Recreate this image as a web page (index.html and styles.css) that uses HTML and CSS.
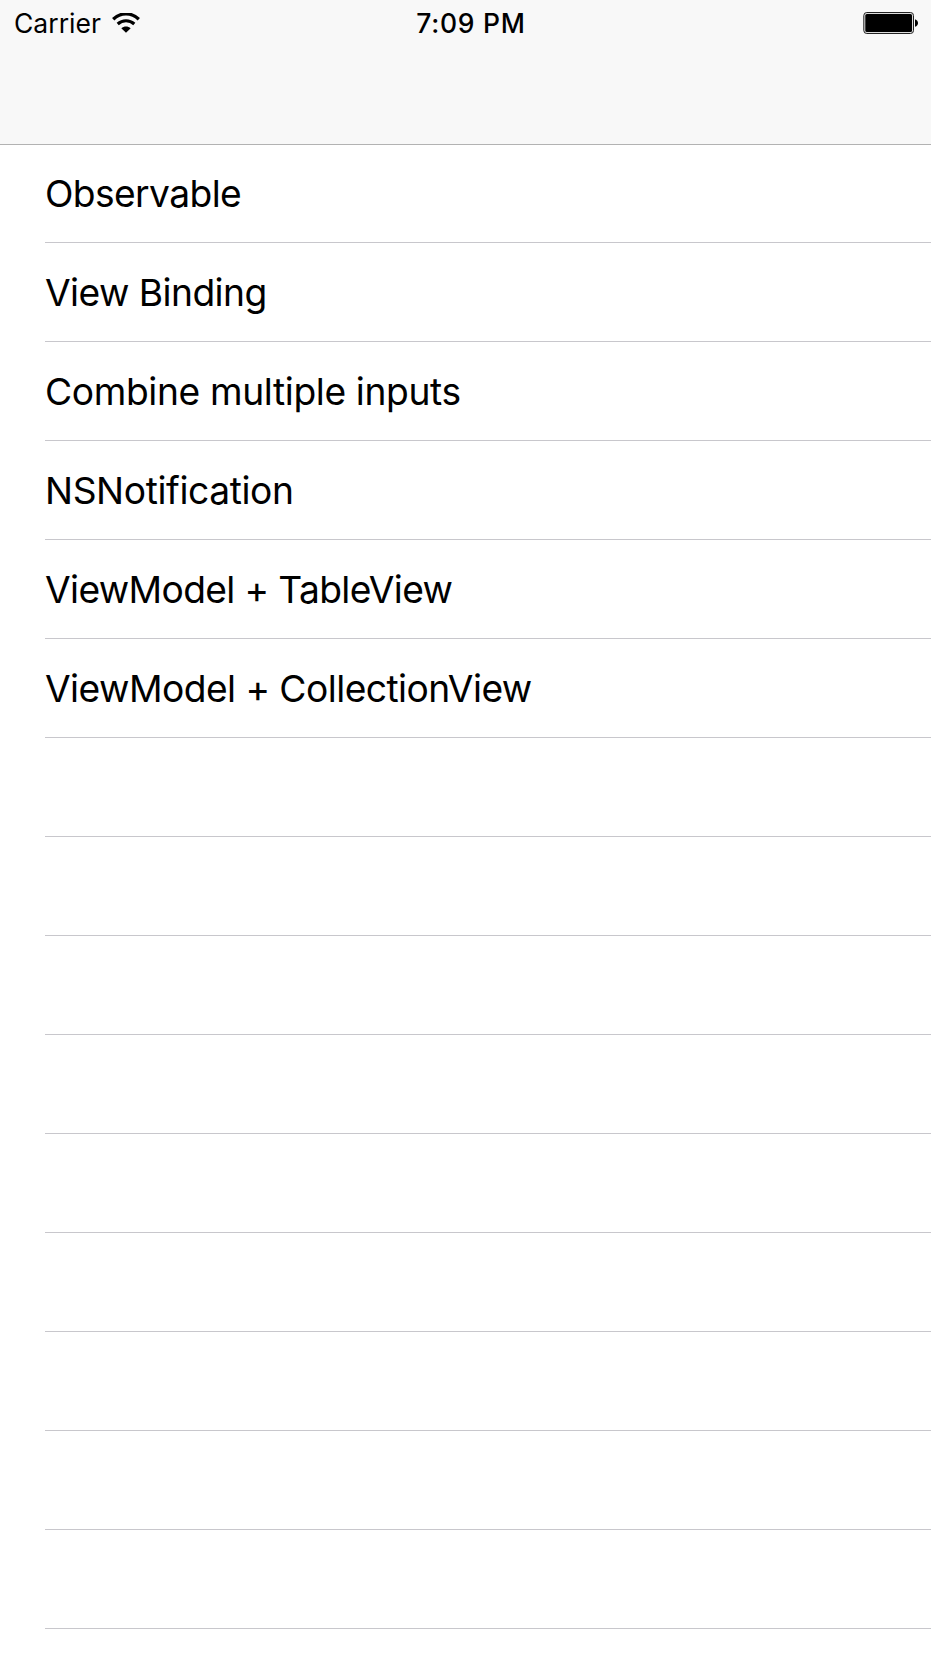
FILE: index.html
```
<!DOCTYPE html>
<html lang="en">
<head>
<meta charset="utf-8">
<title>Examples</title>
<link rel="stylesheet" href="styles.css">
</head>
<body>
<header class="navbar">
  <div class="status">
    <div class="status-left">
      <span class="carrier">Carrier</span>
      <svg class="wifi" width="28" height="20" viewBox="0 0 28 20">
        <path d="M1.200 6.200C8.500-.9 19.500-.9 26.800 6.200" fill="none" stroke="#000" stroke-width="3.300"/>
        <path d="M5.700 11C10.500 6.600 17.500 6.600 22.300 11" fill="none" stroke="#000" stroke-width="3.100"/>
        <path d="M14 19.800L9.300 15.200C12 12.900 16 12.900 18.700 15.200Z" fill="#000"/>
      </svg>
    </div>
    <span class="time">7:09 PM</span>
    <svg class="battery" width="56" height="22" viewBox="0 0 56 22">
      <rect x=".8" y=".5" width="49.700" height="21" rx="3" fill="#ddd" stroke="#222"/>
      <rect x="2.300" y="2" width="46.700" height="18" rx="1.500" fill="#000"/>
      <path d="M52 7.200C56 8.500 56 13.500 52 14.800Z" fill="#000"/>
    </svg>
  </div>
</header>
<ul class="list">
  <li class="row"><span class="label observable">Observable</span></li>
  <li class="row"><span class="label binding">View Binding</span></li>
  <li class="row"><span class="label combine">Combine multiple inputs</span></li>
  <li class="row"><span class="label notification">NSNotification</span></li>
  <li class="row"><span class="label table">ViewModel + TableView</span></li>
  <li class="row"><span class="label collection">ViewModel + CollectionView</span></li>
  <li class="row"></li>
  <li class="row"></li>
  <li class="row"></li>
  <li class="row"></li>
  <li class="row"></li>
  <li class="row"></li>
  <li class="row"></li>
  <li class="row"></li>
  <li class="row"></li>
</ul>
</body>
</html>
```
FILE: styles.css
```
* { box-sizing: border-box; }
body {
  margin: 0;
  height: 1656px;
  overflow: hidden;
  background: #fff;
  color: #000;
  font-family: Inter, "Liberation Sans", sans-serif;
}
.navbar {
  height: 145px;
  background: #f8f8f8;
  border-bottom: 1px solid #b2b2b2;
}
.status {
  display: grid;
  grid-template-columns: 1fr auto 1fr;
  align-items: center;
  height: 46px;
  padding: 0 12px 0 13px;
  white-space: nowrap;
}
.status-left { display: flex; align-items: center; gap: 11px; padding-left: 1px; }
.carrier { font-size: 26.500px; }
.time {
  padding-left: 10px;
  font-size: 26.500px;
  font-weight: 550;
  letter-spacing: .75px;
}
.battery { justify-self: end; }
.list { margin: 0; padding: 0; list-style: none; }
.row {
  display: flex;
  align-items: center;
  height: 99px;
  margin-left: 45px;
  padding-top: 2px;
  border-bottom: 1px solid #c8c7cc;
}
.row:first-child { height: 98px; padding-top: 1px; }
.label { font-size: 37.200px; line-height: 46px; white-space: nowrap; }
.observable { letter-spacing: -.6px; }
.binding { letter-spacing: -.56px; }
.combine { letter-spacing: -.37px; }
.notification { letter-spacing: -.39px; }
.table { letter-spacing: -.64px; }
.collection { letter-spacing: -.55px; }
```
